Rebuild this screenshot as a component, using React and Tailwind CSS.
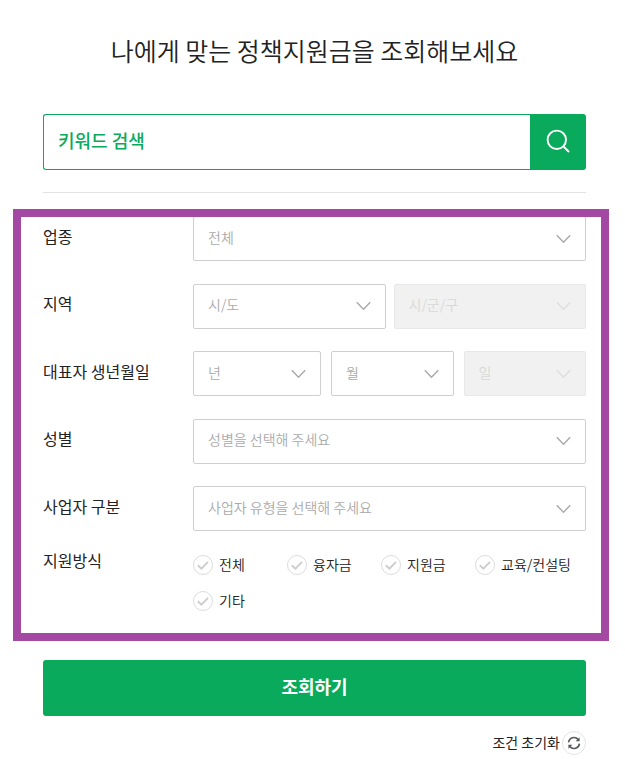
import React, { useState } from "react";

const methods = ["전체", "융자금", "지원금", "교육/컨설팅", "기타"];

function Chevron({ className }) {
  return (
    <svg
      className={`pointer-events-none absolute top-1/2 right-[15px] -translate-y-1/2 ${className}`}
      width="15"
      height="9"
      viewBox="0 0 15 9"
      fill="none"
      stroke="currentColor"
      strokeWidth="1.4"
      aria-hidden="true"
    >
      <path d="M0.8 0.8 7.5 7.8 14.2 0.8" />
    </svg>
  );
}

function SelectBox({ id, label, placeholder, disabled, className = "" }) {
  return (
    <div className={`relative ${className}`}>
      <select
        id={id}
        aria-label={label}
        disabled={disabled}
        className="block h-[45px] w-full appearance-none rounded-[2px] border border-[#cfcfcf] bg-white pr-10 pb-1 pl-[14px] text-sm font-[350] text-[#aaa] disabled:border-[#e8e8e8] disabled:bg-[#f1f1f1] disabled:text-[#d8d8d8] disabled:opacity-100"
      >
        <option>{placeholder}</option>
      </select>
      <Chevron className={disabled ? "text-[#dedede]" : "text-[#a9a9a9]"} />
    </div>
  );
}

function Row({ id, label, children }) {
  return (
    <div className="flex items-center">
      <label htmlFor={id} className="w-[150px] shrink-0 pb-[6px] text-base text-[#222]">
        {label}
      </label>
      <div className="flex min-w-0 flex-1">{children}</div>
    </div>
  );
}

function CheckItem({ label, checked, onChange }) {
  return (
    <label className="flex h-5 items-center gap-[6px] text-sm font-[350] whitespace-nowrap text-[#222]">
      <span className="relative block size-5 shrink-0">
        <input
          type="checkbox"
          checked={checked}
          onChange={onChange}
          className="peer block size-5 appearance-none rounded-full border border-[#dcdcdc] bg-white checked:border-[#0aaa5c]"
        />
        <svg
          className="pointer-events-none absolute inset-0 text-[#cdcdcd] peer-checked:text-[#0aaa5c]"
          viewBox="0 0 20 20"
          fill="none"
          stroke="currentColor"
          strokeWidth="1.9"
          aria-hidden="true"
        >
          <path d="M4.8 10.2 8.4 13.6 15 6.8" />
        </svg>
      </span>
      <span className="pb-[2px]">{label}</span>
    </label>
  );
}

export default function App() {
  const [keyword, setKeyword] = useState("");
  const [selected, setSelected] = useState([]);

  const toggle = (name) =>
    setSelected((prev) =>
      prev.includes(name) ? prev.filter((n) => n !== name) : [...prev, name]
    );

  const reset = () => {
    setKeyword("");
    setSelected([]);
  };

  return (
    <form
      onSubmit={(e) => e.preventDefault()}
      onReset={reset}
      className="bg-white pt-8 pr-4 pb-1 pl-[13px] font-['Noto_Sans_CJK_KR',sans-serif]"
    >
      <div className="pr-[23px] pl-[30px]">
        <h1 className="text-center text-[25px] leading-9 font-[350] text-[#222]">
          나에게 맞는 정책지원금을 조회해보세요
        </h1>

        {/* Keyword search */}
        <div className="mt-[46px] flex h-14">
          <input
            type="text"
            aria-label="키워드 검색"
            placeholder="키워드 검색"
            value={keyword}
            onChange={(e) => setKeyword(e.target.value)}
            className="min-w-0 flex-1 rounded-l-[3px] border border-r-0 border-[#0aaa5c] pb-1 pl-[14px] text-lg font-medium text-[#0aaa5c] outline-none placeholder:text-[#0aaa5c]"
          />
          <button
            type="submit"
            aria-label="검색"
            className="flex size-14 items-center justify-center rounded-r-[3px] bg-[#0aaa5c] pb-[2px] text-white"
          >
            <svg width="24" height="24" viewBox="0 0 24 24" fill="none" stroke="currentColor" strokeWidth="1.9" aria-hidden="true">
              <circle cx="10.8" cy="10.8" r="9.2" />
              <path d="M17.2 17.2 23 23" />
            </svg>
          </button>
        </div>

        <hr className="mt-[22px] border-[#e2e2e2]" />
      </div>

      {/* Filters */}
      <section className="mt-4 overflow-hidden border-8 border-[#a349a4] pr-[15px] pb-[22px] pl-[22px]">
        <div className="-mt-px flex min-h-[315px] flex-col justify-between">
          <Row id="industry" label="업종">
            <SelectBox id="industry" placeholder="전체" className="flex-1" />
          </Row>
          <Row id="city" label="지역">
            <div className="grid flex-1 grid-cols-2 gap-2">
              <SelectBox id="city" placeholder="시/도" />
              <SelectBox id="district" label="시/군/구" placeholder="시/군/구" disabled />
            </div>
          </Row>
          <Row id="year" label="대표자 생년월일">
            <div className="flex flex-1 gap-[10px]">
              <SelectBox id="year" placeholder="년" className="w-32" />
              <SelectBox id="month" label="월" placeholder="월" className="flex-1" />
              <SelectBox id="day" label="일" placeholder="일" disabled className="flex-1" />
            </div>
          </Row>
          <Row id="gender" label="성별">
            <SelectBox id="gender" placeholder="성별을 선택해 주세요" className="flex-1" />
          </Row>
          <Row id="business" label="사업자 구분">
            <SelectBox id="business" placeholder="사업자 유형을 선택해 주세요" className="flex-1" />
          </Row>
        </div>

        <div role="group" aria-labelledby="method" className="mt-[17px] flex">
          <span id="method" className="w-[150px] shrink-0 text-base text-[#222]">
            지원방식
          </span>
          <div className="grid min-w-0 flex-1 grid-cols-[repeat(auto-fill,94px)] gap-y-4 pt-[7px]">
            {methods.map((name) => (
              <CheckItem
                key={name}
                label={name}
                checked={selected.includes(name)}
                onChange={() => toggle(name)}
              />
            ))}
          </div>
        </div>
      </section>

      <div className="mt-[19px] pr-[23px] pl-[30px]">
        <button
          type="submit"
          className="block h-14 w-full rounded-[3px] bg-[#0aaa5c] pb-1 text-lg font-bold text-white"
        >
          조회하기
        </button>
        <button type="reset" className="mt-[15px] ml-auto flex h-6 items-center gap-[2px] text-sm text-[#222]">
          <span className="pb-[2px]">조건 초기화</span>
          <span className="flex size-6 items-center justify-center rounded-full border border-[#e4e4e4]">
            <svg width="14" height="14" viewBox="0 0 14 14" fill="none" stroke="#55585c" strokeWidth="1.6" aria-hidden="true">
              <path d="M1.6 6.4A5.4 5.4 0 0 1 11.2 3.6M12.4 7.6A5.4 5.4 0 0 1 2.8 10.4" />
              <path d="M12.6 1.2V5.2H8.6ZM1.4 12.8V8.8H5.4Z" fill="#55585c" stroke="none" />
            </svg>
          </span>
        </button>
      </div>
    </form>
  );
}
